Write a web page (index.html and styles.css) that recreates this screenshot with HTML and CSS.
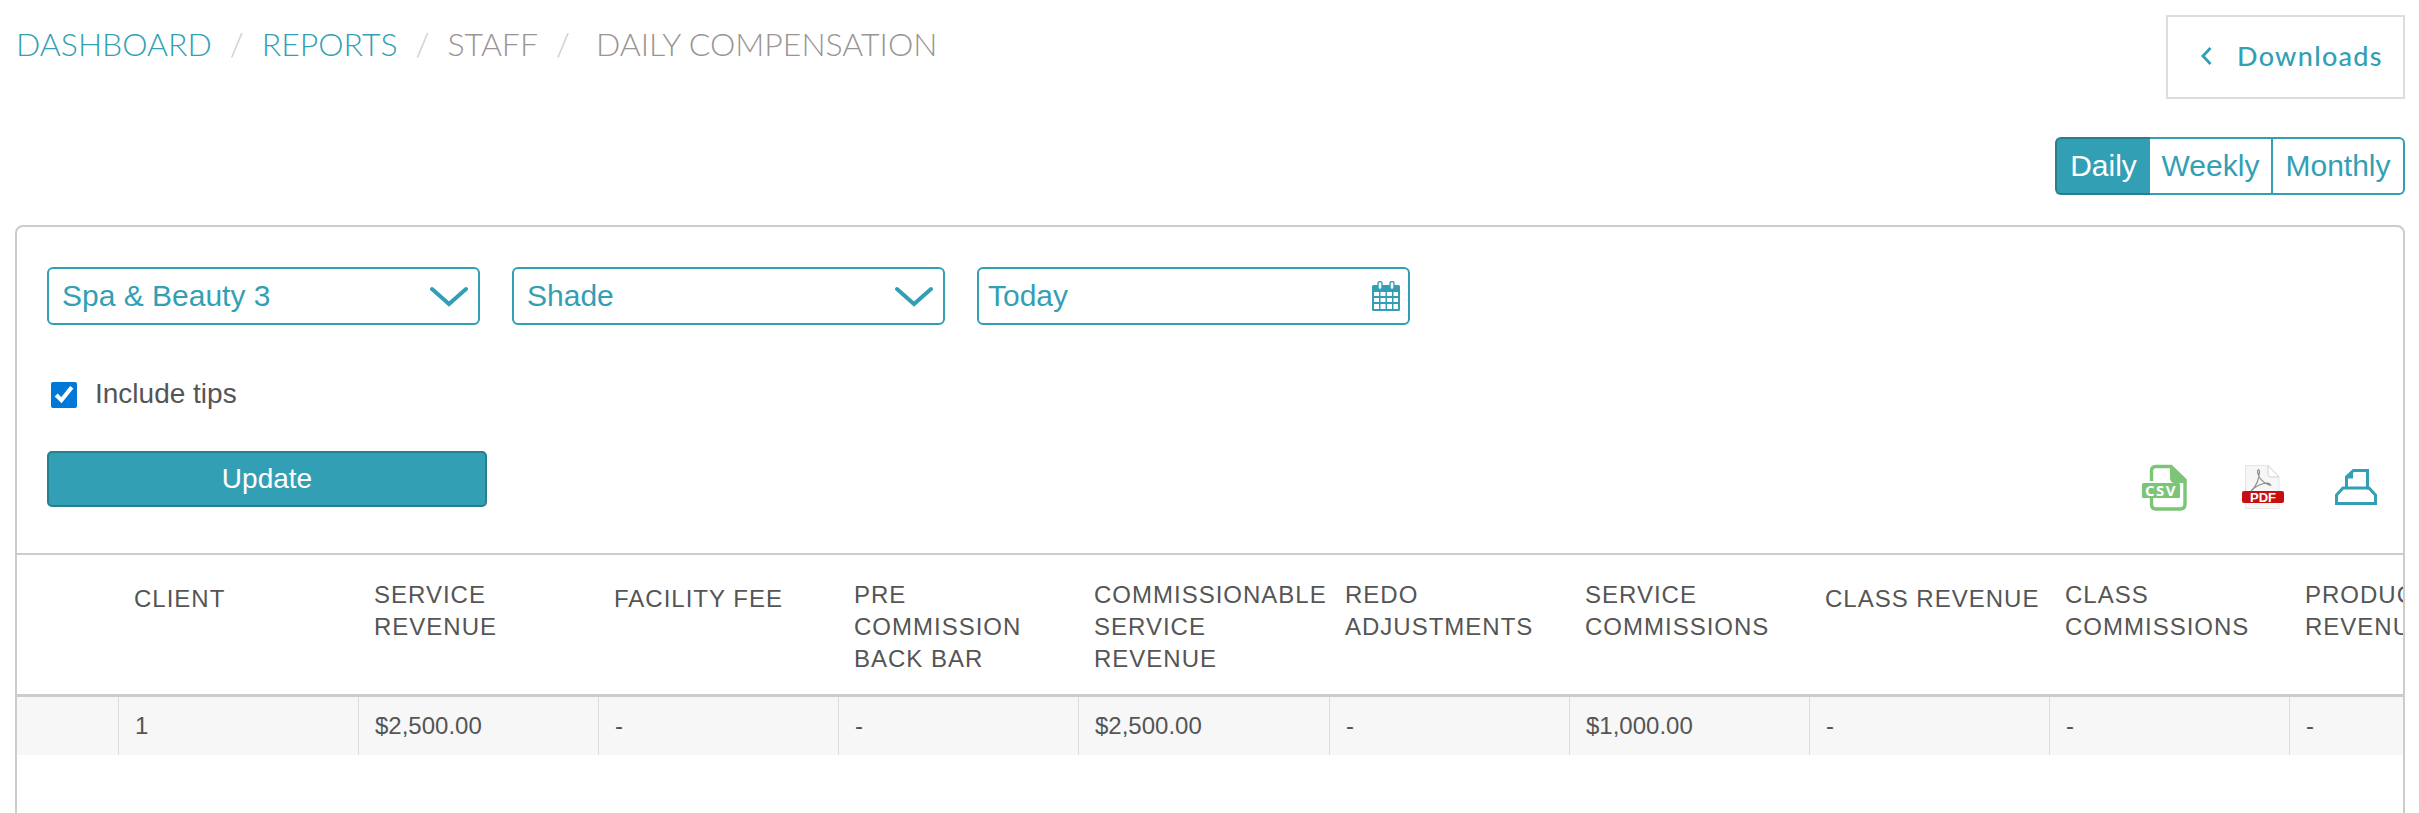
FILE: index.html
```html
<!DOCTYPE html>
<html lang="en">
<head>
  <meta charset="UTF-8">
  <title>Daily Compensation</title>
  <link rel="stylesheet" href="styles.css">
</head>
<body>

  <div class="top-bar">
    <nav class="breadcrumb">
      <a class="crumb-link">Dashboard</a>
      <span class="crumb-sep">/</span>
      <a class="crumb-link">Reports</a>
      <span class="crumb-sep">/</span>
      <span class="crumb-text">Staff</span>
      <span class="crumb-sep">/</span>
      <span class="crumb-text crumb-last">Daily Compensation</span>
    </nav>
    <a class="downloads">
      <svg class="downloads-icon" width="11" height="20" viewBox="0 0 11 20"><path d="M9.5 2 L2 10 L9.5 18" fill="none" stroke="#339fb5" stroke-width="2.8"/></svg>
      <span>Downloads</span>
    </a>
  </div>

  <div class="period-row">
    <div class="period-group">
      <button class="period-btn period-daily">Daily</button>
      <button class="period-btn period-weekly">Weekly</button>
      <button class="period-btn period-monthly">Monthly</button>
    </div>
  </div>

  <div class="card">
    <div class="filters">
      <div class="filter-row">
        <div class="field">
          <span>Spa &amp; Beauty 3</span>
          <svg class="chevron" width="38" height="21" viewBox="0 0 38 21"><path d="M2 3 L19 18 L36 3" fill="none" stroke="#339fb5" stroke-width="4" stroke-linecap="round"/></svg>
        </div>
        <div class="field">
          <span>Shade</span>
          <svg class="chevron" width="38" height="21" viewBox="0 0 38 21"><path d="M2 3 L19 18 L36 3" fill="none" stroke="#339fb5" stroke-width="4" stroke-linecap="round"/></svg>
        </div>
        <div class="field field-date">
          <span>Today</span>
          <svg class="calendar" width="28" height="30" viewBox="0 0 28 30">
            <rect x="0" y="4" width="28" height="26" rx="1.5" fill="#339fb5"/>
            <rect x="6" y="0.5" width="4" height="8" rx="2" fill="#fff" stroke="#339fb5" stroke-width="1.4"/>
            <rect x="18" y="0.5" width="4" height="8" rx="2" fill="#fff" stroke="#339fb5" stroke-width="1.4"/>
            <g fill="#fff">
              <rect x="2" y="11" width="5" height="4"/><rect x="8.5" y="11" width="5" height="4"/><rect x="15" y="11" width="5" height="4"/><rect x="21.5" y="11" width="4.5" height="4"/>
              <rect x="2" y="17" width="5" height="4"/><rect x="8.5" y="17" width="5" height="4"/><rect x="15" y="17" width="5" height="4"/><rect x="21.5" y="17" width="4.5" height="4"/>
              <rect x="2" y="23" width="5" height="5"/><rect x="8.5" y="23" width="5" height="5"/><rect x="15" y="23" width="5" height="5"/><rect x="21.5" y="23" width="4.5" height="5"/>
            </g>
          </svg>
        </div>
      </div>

      <label class="tips-row">
        <input type="checkbox" class="tips-check" checked>
        <span class="tips-label">Include tips</span>
      </label>

      <div class="action-row">
        <button class="update-btn">Update</button>
        <div class="export-icons">
          <!-- csv -->
          <svg class="icon-csv" width="45" height="48" viewBox="0 0 45 48">
            <path d="M9.5 18 V8 Q9.5 3.5 14 3.5 H29 L43 17 V41 Q43 46 38 46 H14 Q9.5 46 9.5 41 V35" fill="none" stroke="#7cc576" stroke-width="3.4"/>
            <path d="M28 2 L44.5 18 V20 H33 Q28 20 28 15 Z" fill="#7cc576"/>
            <rect x="0" y="20" width="38" height="15" rx="1.5" fill="#7cc576"/>
            <text x="19" y="32.5" class="csv-label">CSV</text>
          </svg>
          <!-- pdf -->
          <svg class="icon-pdf" width="42" height="44" viewBox="0 0 42 44">
            <path d="M3.5 0.5 H26 L37 12 V43.5 H3.5 Z" fill="#f6f6f6" stroke="#e6e6e6"/>
            <path d="M26 0.5 V9 Q26 12 29 12 H37 Z" fill="#fff" stroke="#cfcfcf"/>
            <path d="M9 26 Q17 19 17.5 6 Q16 3 15.5 7 Q17 16 27 20 Q31 21 26 18 Q17 18 9 26" fill="none" stroke="#8c8c8c" stroke-width="1.2"/>
            <rect x="0" y="26" width="42" height="12" rx="2" fill="#c70f0f"/>
            <text x="21" y="36.5" class="pdf-label">PDF</text>
          </svg>
          <!-- print -->
          <svg class="icon-print" width="42" height="36" viewBox="0 0 42 36">
            <path d="M11.5 19 V8 L18.5 1.5 H32.5 V19 Z" fill="#fff" stroke="#339fb5" stroke-width="3"/>
            <path d="M10 9.5 L18 1 V9.5 Z" fill="#339fb5"/>
            <path d="M10 19 H8 L1.5 26 V34.5 H40.5 V26 L34 19 H32" fill="none" stroke="#339fb5" stroke-width="3"/>
          </svg>
        </div>
      </div>
    </div>

    <div class="table-wrap">
      <table class="report-table">
        <colgroup>
          <col class="col-first">
          <col class="col-std"><col class="col-std"><col class="col-std"><col class="col-std">
          <col class="col-wide">
          <col class="col-std"><col class="col-std"><col class="col-std"><col class="col-std"><col class="col-std">
        </colgroup>
        <thead>
          <tr>
            <th></th>
            <th class="one-line">Client</th>
            <th>Service<br>Revenue</th>
            <th class="one-line">Facility Fee</th>
            <th>Pre<br>Commission<br>Back Bar</th>
            <th>Commissionable<br>Service<br>Revenue</th>
            <th>Redo<br>Adjustments</th>
            <th>Service<br>Commissions</th>
            <th class="one-line">Class Revenue</th>
            <th>Class<br>Commissions</th>
            <th>Product<br>Revenue</th>
          </tr>
        </thead>
        <tbody>
          <tr>
            <td></td>
            <td>1</td>
            <td>$2,500.00</td>
            <td>-</td>
            <td>-</td>
            <td>$2,500.00</td>
            <td>-</td>
            <td>$1,000.00</td>
            <td>-</td>
            <td>-</td>
            <td>-</td>
          </tr>
        </tbody>
      </table>
    </div>
  </div>

</body>
</html>
```

FILE: styles.css
```css
html, body {
  margin: 0;
  height: 813px;
  overflow: hidden;
}
body {
  background: #fff;
  font-family: "Liberation Sans", Arial, sans-serif;
  padding: 15px 14px 0 15px;
  box-sizing: border-box;
}

/* top */
.top-bar {
  display: flex;
  justify-content: space-between;
  align-items: flex-start;
}
.breadcrumb {
  display: flex;
  align-items: center;
  padding: 9px 0 0 1px;
  font-family: Lato, sans-serif;
  font-weight: 300;
  font-size: 32px;
  line-height: 40px;
  text-transform: uppercase;
}
.crumb-link {
  color: #339fb5;
}
.crumb-text {
  color: #9a9494;
}
.crumb-sep {
  color: #ccc;
  margin: 0 18px;
}
.crumb-last {
  margin-left: 8px;
}
.downloads {
  width: 239px;
  height: 84px;
  box-sizing: border-box;
  border: 2px solid #ddd;
  display: flex;
  align-items: center;
  padding: 0 0 3px 33px;
  gap: 25px;
  color: #339fb5;
  font-family: Lato, sans-serif;
  font-weight: 500;
  font-size: 27px;
  letter-spacing: 1.3px;
}

/* daily weekly monthly */
.period-row {
  display: flex;
  justify-content: flex-end;
  margin-top: 38px;
}
.period-group {
  display: flex;
  height: 58px;
}
.period-btn {
  font-family: "Liberation Sans", Arial, sans-serif;
  font-size: 30px;
  padding: 0;
  background: #fff;
  color: #339fb5;
  border: 2px solid #339fb5;
  border-left: none;
}
.period-daily {
  width: 95px;
  background: #339fb5;
  color: #fff;
  border: 2px solid #267f8f;
  border-right: none;
  border-radius: 6px 0 0 6px;
}
.period-weekly {
  width: 123px;
}
.period-monthly {
  width: 132px;
  border-radius: 0 6px 6px 0;
}

/* card */
.card {
  margin-top: 30px;
  height: 700px;
  border: 2px solid #ccc;
  border-radius: 8px;
}
.filters {
  padding: 40px 26px 42px 30px;
  border-bottom: 2px solid #ccc;
}
.filter-row {
  display: flex;
  gap: 32px;
}
.field {
  width: 433px;
  height: 58px;
  box-sizing: border-box;
  border: 2px solid #339fb5;
  border-radius: 6px;
  display: flex;
  align-items: center;
  justify-content: space-between;
  padding: 0 10px 0 13px;
  color: #339fb5;
  font-size: 30px;
}
.field-date {
  padding: 0 8px 0 9px;
}
.tips-row {
  display: flex;
  align-items: center;
  gap: 18px;
  margin-top: 57px;
  padding-left: 4px;
  height: 26px;
  color: #555;
  font-size: 28px;
}
.tips-label {
  padding-bottom: 3px;
}
.tips-check {
  width: 26px;
  height: 26px;
  margin: 0;
  accent-color: #0078d7;
}
.action-row {
  display: flex;
  justify-content: space-between;
  align-items: flex-start;
  margin-top: 43px;
}
.update-btn {
  width: 440px;
  height: 56px;
  background: #339fb5;
  border: 2px solid #267f8f;
  border-radius: 5px;
  color: #fff;
  font-family: "Liberation Sans", Arial, sans-serif;
  font-size: 28px;
  padding: 0;
}
.export-icons {
  display: flex;
  align-items: center;
  gap: 51px;
  margin-top: 12px;
}
.export-icons svg {
  display: block;
}
.icon-csv {
  margin-right: 4px;
}
.csv-label {
  font-family: "Open Sans", sans-serif;
  font-weight: 700;
  font-size: 15px;
  letter-spacing: 1.5px;
  fill: #fff;
  text-anchor: middle;
}
.pdf-label {
  font-family: "Liberation Sans", sans-serif;
  font-weight: 700;
  font-size: 13px;
  fill: #fff;
  text-anchor: middle;
}

/* table */
.table-wrap {
  overflow: hidden;
}
.report-table {
  table-layout: fixed;
  width: 2512px;
  border-collapse: separate;
  border-spacing: 0;
  color: #555;
}
.col-first {
  width: 101px;
}
.col-std {
  width: 240px;
}
.col-wide {
  width: 251px;
}
.report-table th {
  text-align: left;
  vertical-align: top;
  font-weight: 400;
  font-size: 24px;
  line-height: 32px;
  letter-spacing: 1px;
  text-transform: uppercase;
  padding: 24px 0 19px 16px;
  border-bottom: 3px solid #ccc;
}
.report-table th.one-line {
  padding-top: 28px;
}
.report-table td {
  height: 58px;
  box-sizing: border-box;
  background: #f7f7f7;
  font-size: 24px;
  padding: 0 0 0 16px;
  border-left: 1px solid #ddd;
}
.report-table td:first-child {
  border-left: none;
}
```
